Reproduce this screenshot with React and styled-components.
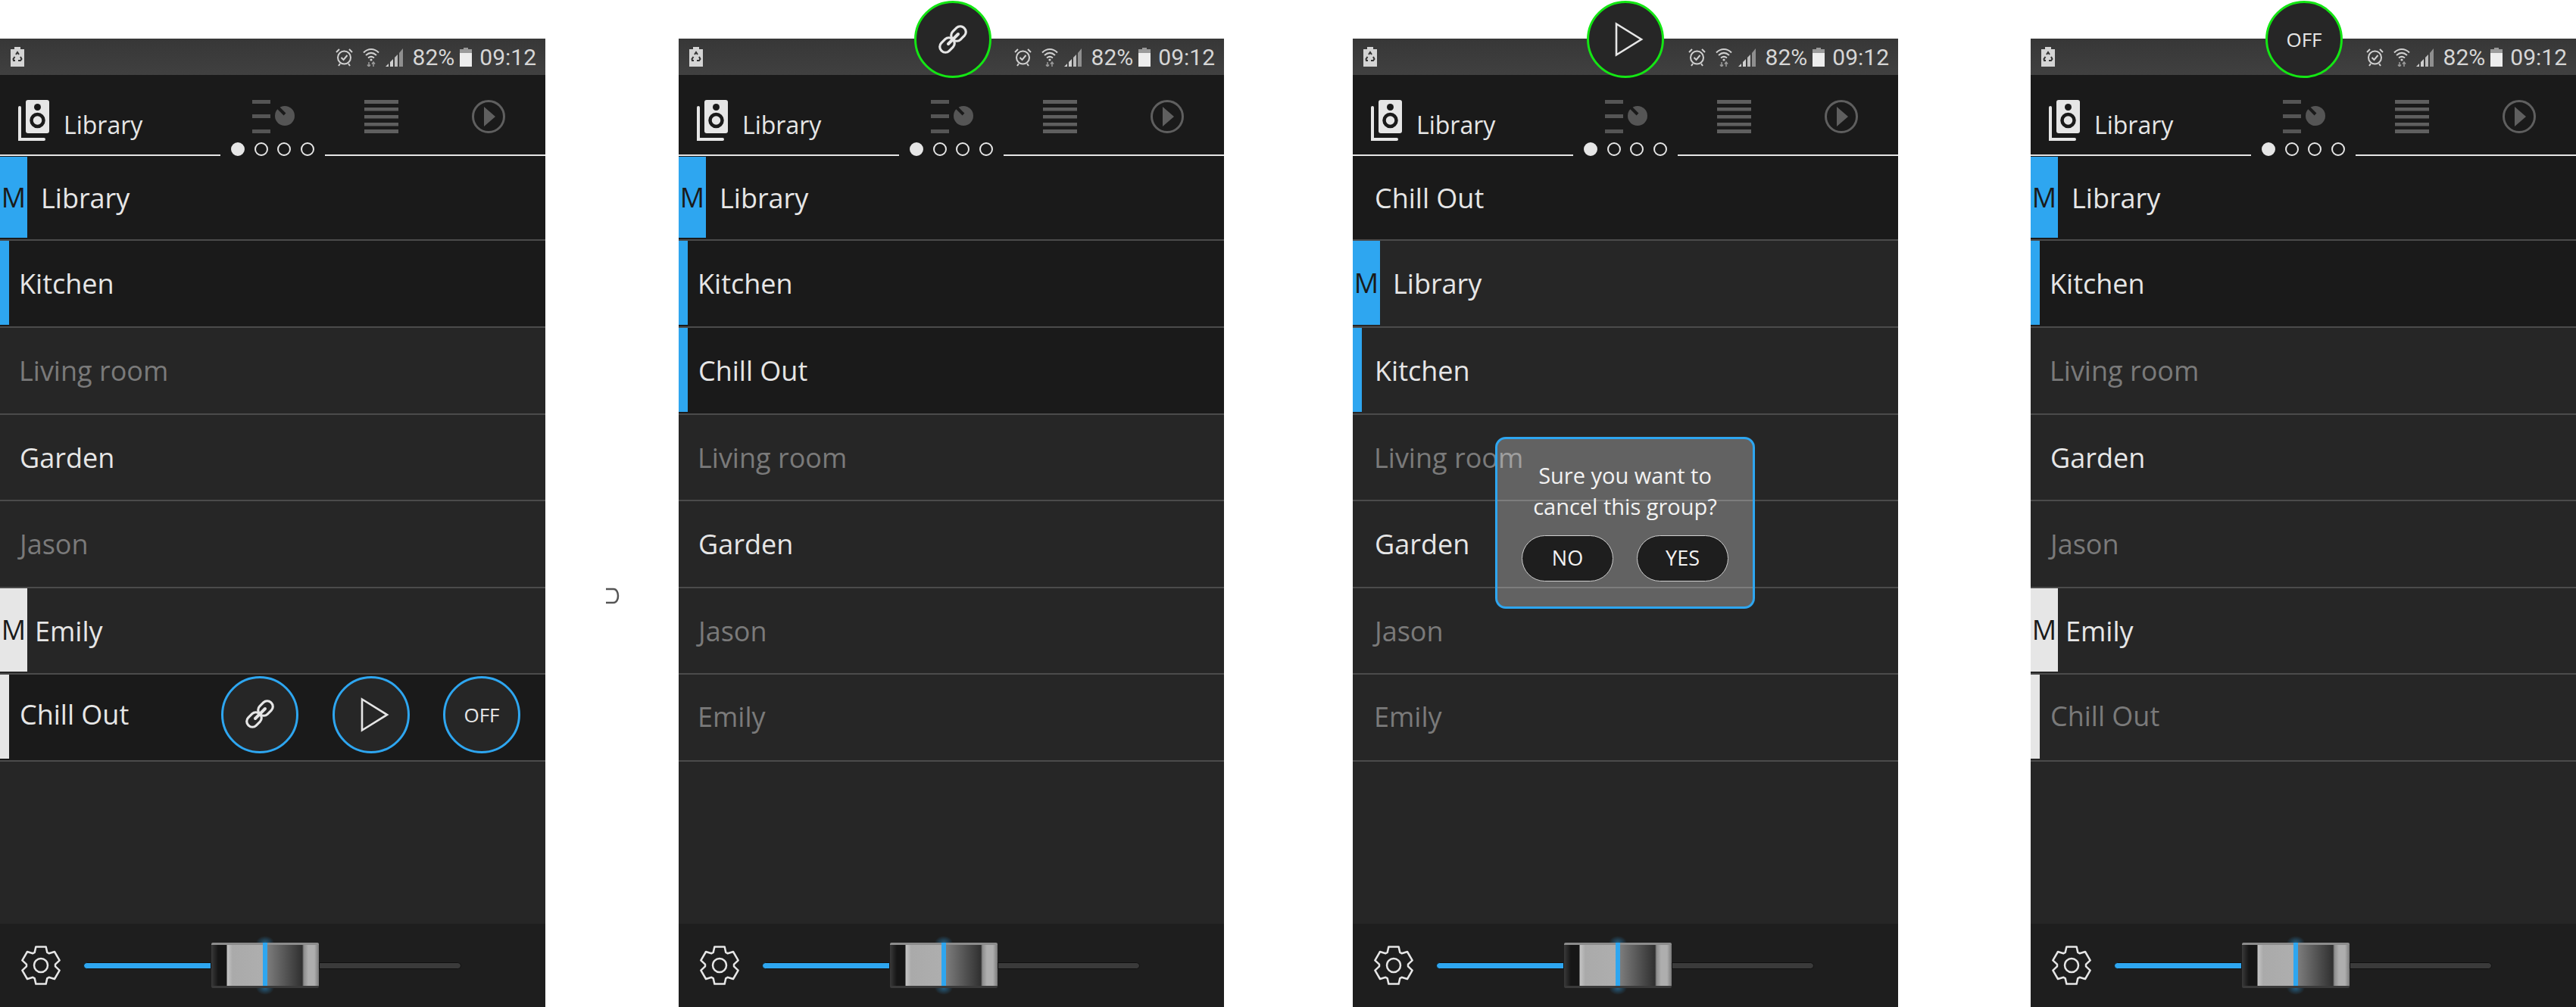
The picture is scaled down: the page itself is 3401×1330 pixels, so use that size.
import React from 'react'
import styled, { createGlobalStyle } from 'styled-components'

const BLUE = '#2ea6f0'
const WHITE = '#e6e6e6'

const GlobalStyle = createGlobalStyle`
  html, body {
    margin: 0;
    padding: 0;
    background: #fff;
  }
  * {
    box-sizing: border-box;
  }
`

const Page = styled.div`
  display: flex;
  width: 3401px;
  height: 1330px;
  padding-top: 51px;
  overflow: hidden;
  background: #fff;
  font-family: "Open Sans", Lato, sans-serif;
`

const Gutter = styled.div`
  flex: 0 0 ${props => props.width}px;
  display: flex;
  justify-content: center;
  padding-top: 725px;
`

const Panel = styled.div`
  position: relative;
  flex: 0 0 720px;
  display: flex;
  flex-direction: column;
  background: #262626;
`

const StatusBar = styled.div`
  height: 48px;
  flex: none;
  display: flex;
  align-items: center;
  justify-content: space-between;
  padding: 0 12px 0 14px;
  background: linear-gradient(#373737, #404040);
  color: #d6d6d6;
  font-family: Roboto, sans-serif;
  font-size: 30px;
`

const StatusRight = styled.div`
  display: flex;
  align-items: center;
`

const StatusText = styled.span`
  margin-left: ${props => props.ml}px;
`

const StatusIcon = styled.svg`
  display: block;
  margin-left: ${props => props.ml || 0}px;
`

const Header = styled.div`
  flex: none;
  background: #1a1a1a;
  height: 108px;
`

const HeaderTop = styled.div`
  display: grid;
  grid-template-columns: 333px 148px 142px 1fr;
  height: 89px;
  padding-top: 33px;
`

const Brand = styled.div`
  display: flex;
  align-items: flex-start;
  padding-left: 24px;
  color: ${WHITE};
  font-size: 32px;
`

const BrandName = styled.span`
  margin: 11px 0 0 18px;
  line-height: 44px;
`

const Pager = styled.div`
  display: flex;
  align-items: flex-end;
  height: 18px;
`

const PagerLine = styled.div`
  height: 2px;
  background: ${WHITE};
  ${props => props.fixed ? 'flex: 0 0 291px;' : 'flex: 1;'}
`

const Dots = styled.div`
  display: flex;
  gap: 12.5px;
  padding: 0 14px;
  align-self: flex-start;
`

const Dot = styled.div`
  width: 18px;
  height: 18px;
  border-radius: 50%;
  border: 2px solid ${WHITE};
  background: ${props => props.active ? WHITE : 'transparent'};
`

const Row = styled.div`
  display: flex;
  align-items: stretch;
  height: 114.5px;
  border-bottom: 2px solid #4b4b4b;
  background: ${props => props.dark ? '#1a1a1a' : '#262626'};
  &:nth-child(1) {
    height: 111px;
  }
  &:nth-child(2) {
    height: 115.3px;
  }
`

const Marker = styled.div`
  flex: none;
  width: ${props => props.wide ? 36 : 12}px;
  margin-bottom: 2px;
  background: ${props => props.color};
  color: #1a1a1a;
  display: flex;
  align-items: center;
  justify-content: center;
  font-size: 36px;
  line-height: 1;
  overflow: hidden;
`

const Name = styled.div`
  display: flex;
  align-items: center;
  margin-left: ${props => props.indent}px;
  padding-bottom: ${props => props.lift || 0}px;
  font-size: 36px;
  color: ${props => props.muted ? '#7a7a7a' : WHITE};
`

const Actions = styled.div`
  margin-left: auto;
  display: flex;
  align-items: center;
  gap: 44.5px;
  padding: 0 33px 8px 0;
`

const RoundButton = styled.div`
  width: 102px;
  height: 102px;
  border-radius: 50%;
  border: 3px solid ${BLUE};
  background: #262626;
  color: ${WHITE};
  font-size: 26px;
  display: flex;
  align-items: center;
  justify-content: center;
`

const FloatingButton = styled(RoundButton)`
  position: absolute;
  top: -50px;
  left: ${props => props.left}px;
  border-color: #14e614;
`

const Fill = styled.div`
  flex: 1;
`

const Footer = styled.div`
  flex: none;
  height: 110px;
  display: flex;
  align-items: center;
  padding: 0 0 0 27px;
  background: #1e1e1e;
`

const Slider = styled.div`
  display: flex;
  align-items: center;
  margin-left: 29px;
`

const Track = styled.div`
  height: 9px;
  width: ${props => props.width}px;
  background: ${props => props.on ? BLUE : '#3a3a3a'};
  border: 1px solid #101010;
  border-radius: ${props => props.on ? '5px 0 0 5px' : '0 5px 5px 0'};
`

const Thumb = styled.div`
  position: relative;
  flex: none;
  width: 142px;
  height: 60px;
  border-top: 3px solid #8c8c8c;
  border-bottom: 3px solid #3a3a3a;
  border-radius: 2px;
  background: linear-gradient(90deg,
    #3a3a3a 0, #161616 9px, #161616 20px, #c4c4c4 21px, #aaaaaa 28px,
    #aeaeae 68px, #7c7c7c 74px, #303030 120px, #8c8c8c 122px, #aeaeae 128px, #aeaeae 136px, #7a7a7a 142px);
  &::before, &::after {
    content: '';
    position: absolute;
    left: 59px;
    width: 24px;
    height: 9px;
  }
  &::before {
    top: -12px;
    background: radial-gradient(ellipse at bottom, rgba(46,166,240,.45), transparent 70%);
  }
  &::after {
    bottom: -12px;
    background: radial-gradient(ellipse at top, rgba(46,166,240,.45), transparent 70%);
  }
`

const ThumbLine = styled.div`
  position: absolute;
  left: 68px;
  top: -3px;
  bottom: 0;
  width: 6px;
  background: ${BLUE};
`

const Dialog = styled.div`
  position: absolute;
  left: 188px;
  top: 526px;
  width: 343px;
  height: 227px;
  padding-top: 27px;
  border: 3px solid ${BLUE};
  border-radius: 14px;
  background: rgba(255, 255, 255, .28);
  color: #f2f2f2;
  font-size: 29px;
  line-height: 41px;
  text-align: center;
`

const DialogButtons = styled.div`
  display: flex;
  justify-content: center;
  gap: 31px;
  margin-top: 18px;
`

const DialogButton = styled.div`
  width: 121px;
  height: 61px;
  border: 1.5px solid #cfcfcf;
  border-radius: 31px;
  background: #1e1e1e;
  font-size: 27px;
  line-height: 58px;
`

const gearPath = () => {
  const pts = []
  for (let i = 0; i < 6; i++) {
    const a = i * 60 - 90
    const add = (r, d) => {
      const t = (a + d) * Math.PI / 180
      pts.push(`${(27 + r * Math.cos(t)).toFixed(1)},${(27 + r * Math.sin(t)).toFixed(1)}`)
    }
    add(19, -26)
    add(25.5, -15)
    add(25.5, 15)
    add(19, 26)
  }
  return `M${pts.join('L')}Z`
}

const BatterySaver = () => (
  <StatusIcon width="18" height="26" viewBox="0 0 18 26">
    <path d="M5 0h8v3h5v23H0V3h5z" fill="#d4d4d4" />
    <path d="M7 10l2-3 2 3M13 13l1.5 3-1.5 2h-3M6 18H4l-.5-2 2-3" fill="none" stroke="#333" strokeWidth="2" />
  </StatusIcon>
)

const AlarmIcon = () => (
  <StatusIcon ml={0} width="23" height="25" viewBox="0 0 23 25">
    <circle cx="11.5" cy="13" r="8.5" fill="none" stroke="#d0d0d0" strokeWidth="2" />
    <path d="M7.5 13l3 3 5-6" fill="none" stroke="#d0d0d0" strokeWidth="2" />
    <path d="M1 6l4-4M22 6l-4-4M4 24l2-3M19 24l-2-3" fill="none" stroke="#d0d0d0" strokeWidth="2" />
  </StatusIcon>
)

const WifiIcon = () => (
  <StatusIcon ml={13} width="22" height="25" viewBox="0 0 22 25">
    <path d="M1 6.5c6-6 14-6 20 0M4 10c4.500-4 9.500-4 14 0M7 13.500c2.500-2 5.500-2 8 0" fill="none" stroke="#cfcfcf" strokeWidth="2" />
    <circle cx="11" cy="16" r="1.600" fill="#cfcfcf" />
    <path d="M8 19v6M6 22.500l2 2.500 2-2.500M14 25v-6M12 21.500l2-2.500 2 2.500" fill="none" stroke="#9a9a9a" strokeWidth="1.500" />
  </StatusIcon>
)

const SignalIcon = () => (
  <StatusIcon ml={8} width="25" height="25" viewBox="0 0 25 25">
    <path d="M0 25l4-4v4z" fill="#cfcfcf" />
    <path d="M6 25v-6l4-4v10z" fill="#cfcfcf" />
    <path d="M12 25V13l4-4v16z" fill="#bdbdbd" />
    <path d="M18 25V7l5-6v24z" fill="#8f8f8f" />
  </StatusIcon>
)

const BatteryIcon = () => (
  <StatusIcon ml={7} width="16" height="25" viewBox="0 0 16 25">
    <path d="M5 0h6v2h5v5H0V2h5z" fill="#9a9a9a" />
    <rect y="7" width="16" height="18" fill="#ededed" />
  </StatusIcon>
)

const SpeakerIcon = () => (
  <svg width="42" height="56" viewBox="0 0 42 56" style={{ display: 'block' }}>
    <path d="M2 10v42h32" fill="none" stroke={WHITE} strokeWidth="4" strokeLinecap="round" />
    <rect x="10" y="0" width="31" height="44" rx="3" fill={WHITE} />
    <circle cx="25.500" cy="9.500" r="4.500" fill="#1a1a1a" />
    <circle cx="25.500" cy="27" r="8" fill="none" stroke="#1a1a1a" strokeWidth="4.500" />
  </svg>
)

const MixerIcon = () => (
  <svg width="56" height="44" viewBox="0 0 56 44" style={{ display: 'block' }}>
    <path d="M0 0h24v5H0zM0 19h24v5H0zM0 39h24v5H0z" fill="#555" />
    <circle cx="43" cy="21" r="13" fill="#555" />
    <path d="M34 10l9 9" stroke="#1a1a1a" strokeWidth="4" />
  </svg>
)

const QueueIcon = () => (
  <svg width="45" height="44" viewBox="0 0 45 44" style={{ display: 'block' }}>
    <path d="M0 0h45v5H0zM0 10h45v4.500H0zM0 20h45v4.500H0zM0 30h45v4.500H0zM0 39h45v5H0z" fill="#5f5f5f" />
  </svg>
)

const NowPlayingIcon = () => (
  <svg width="44" height="44" viewBox="0 0 44 44" style={{ display: 'block' }}>
    <circle cx="22" cy="22" r="20.500" fill="none" stroke="#5f5f5f" strokeWidth="3" />
    <path d="M16 9l15 13-15 13z" fill="#5f5f5f" />
  </svg>
)

const LinkIcon = () => (
  <svg width="55" height="55" viewBox="0 0 55 55" style={{ display: 'block' }}>
    <g fill="none" stroke={WHITE} strokeWidth="3.200">
      <rect x="-10.500" y="-7.300" width="21" height="14.600" rx="6.800" transform="translate(34.500 19.500) rotate(-45)" />
      <rect x="-10.500" y="-7.300" width="21" height="14.600" rx="6.800" transform="translate(19.500 34.500) rotate(-45)" />
      <path d="M21 33l13-13" strokeWidth="4" strokeLinecap="round" />
    </g>
  </svg>
)

const PlayIcon = () => (
  <svg width="38" height="46" viewBox="0 0 38 46" style={{ display: 'block', marginLeft: 10 }}>
    <path d="M2 2.500L35 23 2 43.500z" fill="none" stroke={WHITE} strokeWidth="2.600" />
  </svg>
)

const GearIcon = () => (
  <svg width="54" height="54" viewBox="0 0 54 54" style={{ display: 'block', flex: 'none' }}>
    <path d={gearPath()} fill="none" stroke={WHITE} strokeWidth="2.500" strokeLinejoin="round" />
    <circle cx="27" cy="27" r="9" fill="none" stroke={WHITE} strokeWidth="2.500" />
  </svg>
)

const StrayMark = () => (
  <svg width="20" height="22" viewBox="0 0 20 22" style={{ display: 'block' }}>
    <path d="M2 2h10c8 0 8 18 0 18H2" fill="none" stroke="#555" strokeWidth="2.500" />
  </svg>
)

const panels = [
  {
    rows: [
      { name: 'Library', marker: 'M', color: BLUE, indent: 18, dark: true },
      { name: 'Kitchen', marker: 'bar', color: BLUE, indent: 13, dark: true },
      { name: 'Living room', muted: true, indent: 25 },
      { name: 'Garden', indent: 26 },
      { name: 'Jason', muted: true, indent: 26 },
      { name: 'Emily', marker: 'M', color: WHITE, indent: 10 },
      { name: 'Chill Out', marker: 'bar', color: WHITE, indent: 14, dark: true, actions: true, lift: 8 },
    ],
  },
  {
    floating: 'link',
    floatLeft: 311,
    rows: [
      { name: 'Library', marker: 'M', color: BLUE, indent: 18, dark: true },
      { name: 'Kitchen', marker: 'bar', color: BLUE, indent: 13, dark: true },
      { name: 'Chill Out', marker: 'bar', color: BLUE, indent: 14, dark: true },
      { name: 'Living room', muted: true, indent: 25 },
      { name: 'Garden', indent: 26 },
      { name: 'Jason', muted: true, indent: 26 },
      { name: 'Emily', muted: true, indent: 25, lift: 2 },
    ],
  },
  {
    floating: 'play',
    floatLeft: 309,
    dialog: true,
    rows: [
      { name: 'Chill Out', indent: 29, dark: true },
      { name: 'Library', marker: 'M', color: BLUE, indent: 17 },
      { name: 'Kitchen', marker: 'bar', color: BLUE, indent: 17 },
      { name: 'Living room', muted: true, indent: 28 },
      { name: 'Garden', indent: 29 },
      { name: 'Jason', muted: true, indent: 29 },
      { name: 'Emily', muted: true, indent: 28, lift: 2 },
    ],
  },
  {
    floating: 'off',
    floatLeft: 310,
    rows: [
      { name: 'Library', marker: 'M', color: BLUE, indent: 18, dark: true },
      { name: 'Kitchen', marker: 'bar', color: BLUE, indent: 13, dark: true },
      { name: 'Living room', muted: true, indent: 25 },
      { name: 'Garden', indent: 26 },
      { name: 'Jason', muted: true, indent: 26 },
      { name: 'Emily', marker: 'M', color: WHITE, indent: 10 },
      { name: 'Chill Out', marker: 'bar', color: WHITE, indent: 14, muted: true, lift: 4 },
    ],
  },
]

const floatingContent = { link: <LinkIcon />, play: <PlayIcon />, off: 'OFF' }

const Phone = ({ rows, floating, floatLeft, dialog }) => (
  <Panel>
    <StatusBar>
      <BatterySaver />
      <StatusRight>
        <AlarmIcon />
        <WifiIcon />
        <SignalIcon />
        <StatusText ml={11}>82%</StatusText>
        <BatteryIcon />
        <StatusText ml={10}>09:12</StatusText>
      </StatusRight>
    </StatusBar>
    <Header>
      <HeaderTop>
        <Brand>
          <SpeakerIcon />
          <BrandName>Library</BrandName>
        </Brand>
        <MixerIcon />
        <QueueIcon />
        <NowPlayingIcon />
      </HeaderTop>
      <Pager>
        <PagerLine fixed />
        <Dots>
          {[0, 1, 2, 3].map(i => <Dot key={i} active={i === 0} />)}
        </Dots>
        <PagerLine />
      </Pager>
    </Header>
    <div>
      {rows.map(row => (
        <Row key={row.name} dark={row.dark}>
          {row.marker && (
            <Marker wide={row.marker === 'M'} color={row.color}>
              {row.marker === 'M' ? 'M' : null}
            </Marker>
          )}
          <Name indent={row.indent} muted={row.muted} lift={row.lift}>{row.name}</Name>
          {row.actions && (
            <Actions>
              <RoundButton><LinkIcon /></RoundButton>
              <RoundButton><PlayIcon /></RoundButton>
              <RoundButton>OFF</RoundButton>
            </Actions>
          )}
        </Row>
      ))}
    </div>
    <Fill />
    <Footer>
      <GearIcon />
      <Slider>
        <Track on width={169} />
        <Thumb><ThumbLine /></Thumb>
        <Track width={188} />
      </Slider>
    </Footer>
    {floating && <FloatingButton left={floatLeft}>{floatingContent[floating]}</FloatingButton>}
    {dialog && (
      <Dialog>
        Sure you want to<br />cancel this group?
        <DialogButtons>
          <DialogButton>NO</DialogButton>
          <DialogButton>YES</DialogButton>
        </DialogButtons>
      </Dialog>
    )}
  </Panel>
)

export default function App() {
  return (
    <Page>
      <GlobalStyle />
      <Phone {...panels[0]} />
      <Gutter width={176}><StrayMark /></Gutter>
      <Phone {...panels[1]} />
      <Gutter width={170} />
      <Phone {...panels[2]} />
      <Gutter width={175} />
      <Phone {...panels[3]} />
    </Page>
  )
}
